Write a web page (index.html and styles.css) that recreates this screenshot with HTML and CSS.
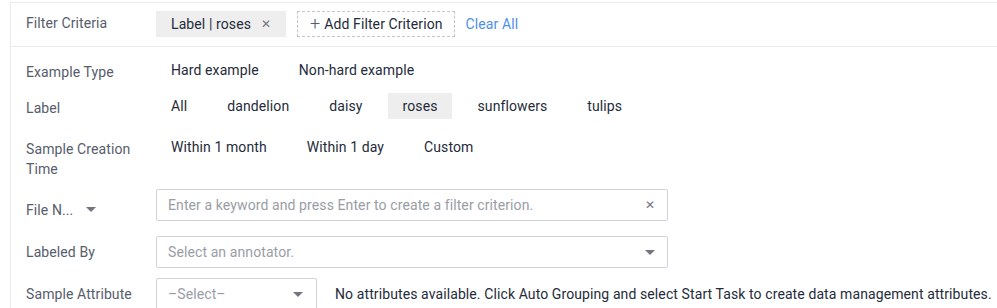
FILE: index.html
```html
<!DOCTYPE html>
<html lang="en">
<head>
    <meta charset="UTF-8">
    <title>Filter Criteria</title>
    <link rel="stylesheet" href="styles.css">
</head>
<body>
    <div class="filter-panel">
        <div class="filter-head">
            <span class="row-label">Filter Criteria</span>
            <span class="chip">Label | roses <span class="chip-close">&#x2715;</span></span>
            <span class="add-criterion"><span class="plus">+</span>Add Filter Criterion</span>
            <a class="clear-all">Clear All</a>
        </div>

        <div class="filter-body">
            <div class="row">
                <span class="row-label">Example Type</span>
                <div class="options">
                    <span class="option">Hard example</span>
                    <span class="option">Non-hard example</span>
                </div>
            </div>

            <div class="row">
                <span class="row-label">Label</span>
                <div class="options">
                    <span class="option">All</span>
                    <span class="option">dandelion</span>
                    <span class="option">daisy</span>
                    <span class="option selected">roses</span>
                    <span class="option">sunflowers</span>
                    <span class="option">tulips</span>
                </div>
            </div>

            <div class="row row-top gap-lg">
                <span class="row-label">Sample Creation<br>Time</span>
                <div class="options">
                    <span class="option">Within 1 month</span>
                    <span class="option">Within 1 day</span>
                    <span class="option">Custom</span>
                </div>
            </div>

            <div class="row field-row">
                <span class="row-label drop-label">File N...<span class="caret"></span></span>
                <div class="field wide">
                    <span class="placeholder">Enter a keyword and press Enter to create a filter criterion.</span>
                    <span class="field-clear">&#x2715;</span>
                </div>
            </div>

            <div class="row field-row gap-lg">
                <span class="row-label">Labeled By</span>
                <div class="field wide">
                    <span class="placeholder">Select an annotator.</span>
                    <span class="caret"></span>
                </div>
            </div>

            <div class="row field-row">
                <span class="row-label">Sample Attribute</span>
                <div class="field narrow">
                    <span class="placeholder">–Select–</span>
                    <span class="caret"></span>
                </div>
                <span class="hint">No attributes available. Click Auto Grouping and select Start Task to create data management attributes.</span>
            </div>
        </div>
    </div>
</body>
</html>
```

FILE: styles.css
```css
body {
    font-family: Roboto, "Liberation Sans", sans-serif;
    font-size: 14px;
    letter-spacing: 0.1px;
    color: #252b3a;
    background-color: #ffffff;
    margin: 0;
    padding: 0;
    overflow: hidden;
}
.filter-panel {
    margin: 2px 0 0 10px;
    border-top: 1px solid #ebebeb;
    border-left: 1px solid #ebebeb;
    height: 305px;
    overflow: hidden;
}
.filter-head {
    display: flex;
    align-items: center;
    padding: 8px 15px 9px 15px;
    border-bottom: 1px solid #ebebeb;
}
.row-label {
    width: 130px;
    flex-shrink: 0;
    color: #575d6c;
    line-height: 20px;
}
.filter-head .row-label {
    margin-top: -3px;
}
.chip {
    display: inline-flex;
    align-items: center;
    width: 130px;
    box-sizing: border-box;
    height: 26px;
    padding: 0 15px;
    background-color: #eeeeee;
    color: #252b3a;
    white-space: nowrap;
}
.chip-close {
    font-size: 12px;
    color: #71757f;
    margin-left: 10px;
}
.add-criterion {
    display: inline-flex;
    align-items: center;
    height: 26px;
    box-sizing: border-box;
    margin-left: 11px;
    padding: 0 11px 0 12px;
    border: 1px dashed #c4c6cc;
    color: #252b3a;
    white-space: nowrap;
}
.plus {
    font-size: 18px;
    font-weight: 300;
    color: #575d6c;
    margin-right: 4px;
    line-height: 1;
}
.clear-all {
    margin-left: 11px;
    color: #4d8fe9;
    cursor: pointer;
}
.filter-body {
    padding: 10px 15px 0 15px;
    display: flex;
    flex-direction: column;
    gap: 10px;
}
.row {
    display: flex;
    align-items: center;
}
.row-top {
    align-items: flex-start;
}
.gap-lg {
    margin-top: 5px;
}
.row .row-label {
    padding-top: 4px;
}
.row-top .row-label {
    padding-top: 5px;
}
.field-row .row-label {
    padding-top: 0;
    padding-bottom: 1px;
}
.options {
    display: flex;
    gap: 10px;
}
.option {
    height: 26px;
    line-height: 26px;
    padding: 0 15px;
    color: #252b3a;
}
.option.selected {
    background-color: #eeeeee;
}
.field-row .drop-label {
    display: flex;
    align-items: center;
    padding-top: 9px;
    padding-bottom: 0;
}
.caret {
    display: inline-block;
    width: 0;
    height: 0;
    border-left: 5px solid transparent;
    border-right: 5px solid transparent;
    border-top: 5px solid #71757f;
}
.drop-label .caret {
    margin-left: 13px;
}
.field {
    display: flex;
    align-items: center;
    justify-content: space-between;
    height: 32px;
    box-sizing: border-box;
    flex-shrink: 0;
    border: 1px solid #d1d3d8;
    border-radius: 2px;
    padding: 0 12px 0 11px;
}
.field.wide {
    width: 512px;
}
.field.narrow {
    width: 161px;
    padding-right: 13px;
}
.placeholder {
    color: #9a9da6;
}
.field-clear {
    font-size: 12px;
    color: #71757f;
}
.hint {
    margin-left: 18px;
    color: #252b3a;
    white-space: nowrap;
}
```
